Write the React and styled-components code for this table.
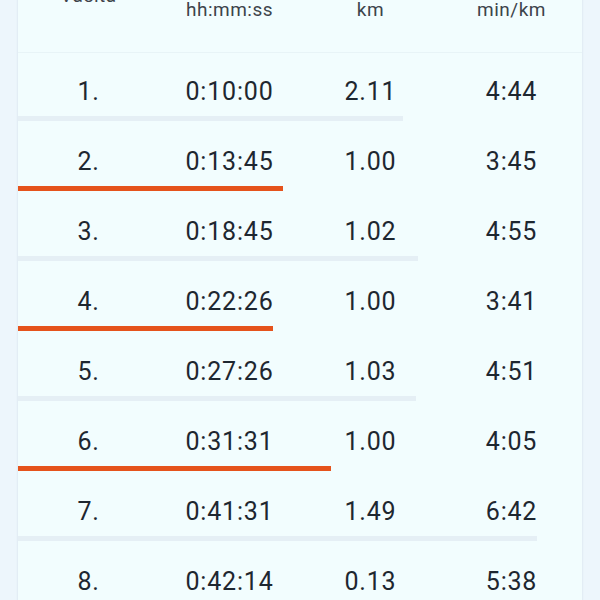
import React from "react";
import styled, { createGlobalStyle } from "styled-components";

const GlobalStyle = createGlobalStyle`
  html, body {
    margin: 0;
    padding: 0;
    background: #edf6fc;
    font-family: Roboto, "Liberation Sans", sans-serif;
    overflow: hidden;
  }
`;

const Page = styled.div`
  width: 600px;
  height: 600px;
  padding: 0 18px;
  box-sizing: border-box;
  overflow: hidden;
`;

const Card = styled.div`
  margin-top: -40px;
  background: #f2fdfe;
  box-shadow: 0 0 2px rgba(60, 90, 120, 0.18);
  min-height: 700px;
`;

const Header = styled.div`
  display: grid;
  grid-template-columns: repeat(4, 1fr);
  height: 92px;
  border-bottom: 1px solid #e8f4f7;
`;

const HeaderCell = styled.div`
  display: flex;
  align-items: flex-end;
  justify-content: center;
  padding-bottom: ${({ $pad }) => $pad}px;
  font-size: 19px;
  line-height: 22px;
  letter-spacing: 0.5px;
  color: #3d444b;
`;

const Row = styled.div`
  display: flex;
  flex-direction: column;
  height: 70px;
`;

const Cells = styled.div`
  display: grid;
  grid-template-columns: repeat(4, 1fr);
  align-items: center;
  height: 50px;
  padding-top: 13px;
`;

const Cell = styled.div`
  text-align: center;
  font-size: 25px;
  color: #1e2730;
  letter-spacing: 0.8px;
`;

const Bar = styled.div`
  height: 5px;
  background: ${({ $hot }) => ($hot ? "#e5531c" : "#e5eff5")};
`;

const laps = [
  ["1.", "0:10:00", "2.11", "4:44", 385],
  ["2.", "0:13:45", "1.00", "3:45", 265],
  ["3.", "0:18:45", "1.02", "4:55", 400],
  ["4.", "0:22:26", "1.00", "3:41", 255],
  ["5.", "0:27:26", "1.03", "4:51", 398],
  ["6.", "0:31:31", "1.00", "4:05", 313],
  ["7.", "0:41:31", "1.49", "6:42", 519],
  ["8.", "0:42:14", "0.13", "5:38", 460],
];

export default function App() {
  return (
    <Page>
      <GlobalStyle />
      <Card>
        <Header>
          <HeaderCell $pad={45}>Vaelta</HeaderCell>
          <HeaderCell $pad={31}>hh:mm:ss</HeaderCell>
          <HeaderCell $pad={31}>km</HeaderCell>
          <HeaderCell $pad={31}>min/km</HeaderCell>
        </Header>
        {laps.map(([n, time, km, pace, w], i) => (
          <Row key={n}>
            <Cells>
              <Cell>{n}</Cell>
              <Cell>{time}</Cell>
              <Cell>{km}</Cell>
              <Cell>{pace}</Cell>
            </Cells>
            <Bar $hot={i % 2 === 1} style={{ width: w }} />
          </Row>
        ))}
      </Card>
    </Page>
  );
}
